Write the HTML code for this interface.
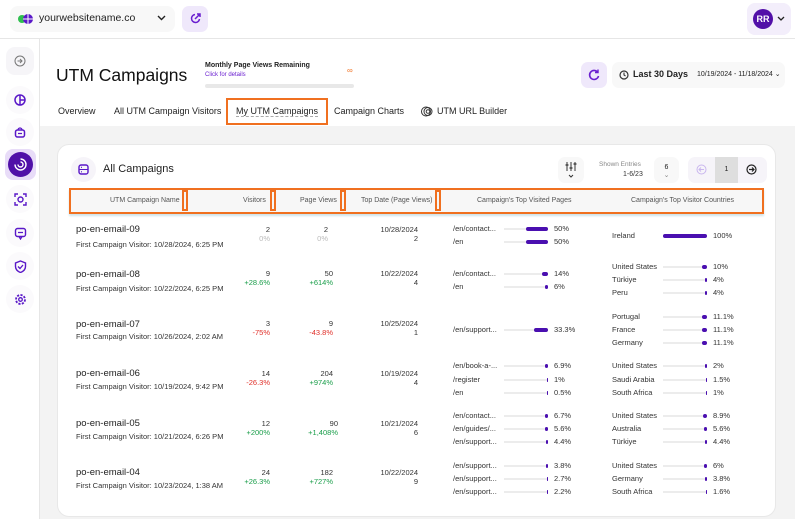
<!DOCTYPE html>
<html><head><meta charset="utf-8"><style>
*{box-sizing:border-box;margin:0;padding:0}
body{width:795px;height:519px;overflow:hidden;background:#fff;font-family:"Liberation Sans",sans-serif;color:#222;position:relative}
.a{position:absolute;white-space:nowrap}
.s{font-size:7.5px;color:#333}
.r{text-align:right}
.trk{position:absolute;height:2px;background:#ececec;width:44px}
.fil{position:absolute;right:0;top:-1px;height:4px;background:#4a0fb0;border-radius:2px}
.ic{position:absolute;width:28px;height:28px;border-radius:50%;background:#fbfafc;display:flex;align-items:center;justify-content:center}
.hd{font-size:7px;color:#555}
.sort{position:absolute;top:190px;width:6px;height:21px;border:2px solid #f07020;background:#f6f6f6}
</style></head><body>
<!-- top bar -->
<div class="a" style="left:10px;top:6px;width:165px;height:26px;border-radius:8px;background:#f8f8f8"></div>
<svg class="a" style="left:17px;top:12px" width="18" height="14"><circle cx="5" cy="7" r="4" fill="#2fbf4f"/><circle cx="11" cy="7" r="5" fill="#5a18c8"/><path d="M6 7h10M11 2v10" stroke="#fff" stroke-width="1"/></svg>
<div class="a" style="left:39px;top:12px;font-size:10.5px;color:#222">yourwebsitename.co</div>
<svg class="a" style="left:157px;top:15px" width="9" height="6"><path d="M1 1l3.5 3.5L8 1" stroke="#222" stroke-width="1.4" fill="none"/></svg>
<div class="a" style="left:182px;top:6px;width:26px;height:26px;border-radius:7px;background:#efe8fb"></div>
<svg class="a" style="left:189px;top:12px" width="13" height="13"><path d="M6 2.5A4 4 0 1 0 10.5 7" stroke="#6a1fd0" stroke-width="1.5" fill="none"/><path d="M6 7l5-5M8 2h3v3" stroke="#6a1fd0" stroke-width="1.5" fill="none"/></svg>
<div class="a" style="left:747px;top:3px;width:44px;height:32px;border-radius:8px;background:#f3eefb"></div>
<div class="a" style="left:753px;top:9px;width:20px;height:20px;border-radius:50%;background:#5210a8;color:#fff;font-size:9px;font-weight:bold;text-align:center;line-height:20px">RR</div>
<svg class="a" style="left:777px;top:16px" width="8" height="6"><path d="M1 1l3 3 3-3" stroke="#222" stroke-width="1.3" fill="none"/></svg>
<div class="a" style="left:0;top:38px;width:795px;height:1px;background:#e6e6e6"></div>
<div class="a" style="left:39px;top:38px;width:1px;height:481px;background:#e6e6e6"></div>
<!-- sidebar -->
<div class="ic" style="left:6px;top:47px;border-radius:9px;background:#f6f5f8"><svg width="12" height="12"><circle cx="6" cy="6" r="5" stroke="#777" fill="none"/><path d="M3.5 6h4M6 4l2 2-2 2" stroke="#777" fill="none"/></svg></div>
<div class="ic" style="left:6px;top:86px"><svg width="12" height="12"><circle cx="6" cy="6" r="5" stroke="#5a18c8" stroke-width="1.5" fill="none"/><path d="M6 1v10M6 6h5" stroke="#5a18c8" stroke-width="1.5"/></svg></div>
<div class="ic" style="left:6px;top:118px"><svg width="12" height="12"><rect x="1.5" y="4" width="9" height="7" rx="2" stroke="#5a18c8" stroke-width="1.5" fill="none"/><path d="M4 4a2 2 0 0 1 4 0M4 7.5h4" stroke="#5a18c8" stroke-width="1.3" fill="none"/></svg></div>
<div class="a" style="left:5px;top:149px;width:31px;height:31px;border-radius:8px;background:#e8dcf8"></div>
<div class="a" style="left:8px;top:152px;width:25px;height:25px;border-radius:50%;background:#5010a8"></div>
<svg class="a" style="left:13px;top:157px" width="15" height="15"><path d="M7.5 2a5.5 5.5 0 1 1-5.5 5.5" stroke="#fff" stroke-width="1.4" fill="none"/><path d="M7.5 5a2.5 2.5 0 1 1-2.5 2.5" stroke="#fff" stroke-width="1.4" fill="none"/></svg>
<div class="ic" style="left:6px;top:185px"><svg width="13" height="13"><path d="M1 4V1h3M9 1h3v3M12 9v3H9M4 12H1V9" stroke="#5a18c8" stroke-width="1.4" fill="none"/><circle cx="6.5" cy="6.5" r="2.5" stroke="#5a18c8" stroke-width="1.4" fill="none"/></svg></div>
<div class="ic" style="left:6px;top:219px"><svg width="13" height="13"><rect x="1.5" y="1.5" width="10" height="8" rx="2" stroke="#5a18c8" stroke-width="1.4" fill="none"/><path d="M5 9.5l1.5 2.5L8 9.5M4 5.5h5" stroke="#5a18c8" stroke-width="1.3" fill="none"/></svg></div>
<div class="ic" style="left:6px;top:252px"><svg width="13" height="13"><path d="M6.5 1l5 2v3.5c0 3-2.5 5-5 6-2.5-1-5-3-5-6V3z" stroke="#5a18c8" stroke-width="1.4" fill="none"/><path d="M4 6.5l2 2 3-3.5" stroke="#5a18c8" stroke-width="1.3" fill="none"/></svg></div>
<div class="ic" style="left:6px;top:285px"><svg width="13" height="13"><circle cx="6.5" cy="6.5" r="4.5" stroke="#5a18c8" stroke-width="1.8" stroke-dasharray="2.2 1.3" fill="none"/><circle cx="6.5" cy="6.5" r="1.8" stroke="#5a18c8" stroke-width="1.3" fill="none"/></svg></div>
<!-- header -->
<div class="a" style="left:56px;top:65px;font-size:17.5px;color:#111">UTM Campaigns</div>
<div class="a" style="left:205px;top:62px;font-size:7px;font-weight:bold;color:#222">Monthly Page Views Remaining</div>
<div class="a" style="left:205px;top:72px;font-size:6px;color:#6a1fd0">Click for details</div>
<div class="a" style="left:347px;top:66px;font-size:8px;color:#f07020">∞</div>
<div class="a" style="left:205px;top:84px;width:149px;height:4px;border-radius:2px;background:#e8e8e8"></div>
<div class="a" style="left:581px;top:62px;width:26px;height:26px;border-radius:7px;background:#efe8fb"></div>
<svg class="a" style="left:588px;top:69px" width="12" height="12"><path d="M9.5 3A4.5 4.5 0 1 0 10.5 7" stroke="#6a1fd0" stroke-width="1.6" fill="none"/><path d="M10 0.5v3H7" stroke="#6a1fd0" stroke-width="1.4" fill="none"/></svg>
<div class="a" style="left:612px;top:62px;width:173px;height:26px;border-radius:7px;background:#f8f8f8"></div>
<svg class="a" style="left:619px;top:70px" width="10" height="10"><circle cx="5" cy="5" r="4" stroke="#333" stroke-width="1.2" fill="none"/><path d="M5 2.5V5l1.5 1" stroke="#333" stroke-width="1.1" fill="none"/></svg>
<div class="a" style="left:633px;top:69px;font-size:9px;font-weight:bold;color:#222">Last 30 Days</div>
<div class="a" style="left:697px;top:70px;font-size:7px;color:#222">10/19/2024 - 11/18/2024 ⌄</div>
<!-- tabs -->
<div class="a" style="left:58px;top:106px;font-size:9px;color:#222">Overview</div>
<div class="a" style="left:114px;top:106px;font-size:9px;color:#222">All UTM Campaign Visitors</div>
<div class="a" style="left:226px;top:98px;width:102px;height:27px;border:2px solid #f07020"></div>
<div class="a" style="left:236px;top:106px;font-size:9px;color:#222;border-bottom:1px dashed #aaa">My UTM Campaigns</div>
<div class="a" style="left:334px;top:106px;font-size:9px;color:#222">Campaign Charts</div>
<svg class="a" style="left:421px;top:106px" width="12" height="11"><circle cx="5" cy="5.5" r="4.5" stroke="#333" fill="none"/><circle cx="7" cy="5.5" r="4" stroke="#333" fill="none"/><circle cx="7" cy="5.5" r="1.8" stroke="#333" fill="none"/></svg>
<div class="a" style="left:437px;top:106px;font-size:9px;color:#222">UTM URL Builder</div>
<!-- gray area -->
<div class="a" style="left:40px;top:126px;width:755px;height:393px;background:#f3f3f3"></div>
<div class="a" style="left:57px;top:144px;width:719px;height:373px;background:#fff;border-radius:12px;border:1px solid #e8e8e8"></div>
<div class="a" style="left:71px;top:157px;width:25px;height:25px;border-radius:50%;background:#f6f4f9"></div>
<svg class="a" style="left:78px;top:164px" width="11" height="11"><rect x="1" y="1" width="9" height="9" rx="2" stroke="#5a18c8" stroke-width="1.4" fill="none"/><path d="M1 5.5h9M3 3.3h1M3 7.8h1" stroke="#5a18c8" stroke-width="1.1"/></svg>
<div class="a" style="left:103px;top:163px;font-size:11px;color:#222">All Campaigns</div>
<div class="a" style="left:558px;top:157px;width:26px;height:26px;border-radius:7px;background:#f8f8f8"></div>
<svg class="a" style="left:565px;top:161px" width="12" height="18"><path d="M2 1v9M6 1v9M10 1v9" stroke="#333"/><path d="M0.5 4h3M4.5 7h3M8.5 3h3" stroke="#333" stroke-width="1.3"/><path d="M4 14l2 2 2-2" stroke="#333" fill="none"/></svg>
<div class="a" style="left:599px;top:161px;font-size:6.5px;color:#888">Shown Entries</div>
<div class="a" style="left:623px;top:171px;font-size:7px;color:#333">1-6/23</div>
<div class="a" style="left:654px;top:157px;width:25px;height:26px;border-radius:7px;background:#f8f8f8;font-size:7px;text-align:center;padding-top:7px">6<br><span style="color:#888">⌄</span></div>
<div class="a" style="left:688px;top:157px;width:79px;height:26px;border-radius:7px;background:#f6f4f9"></div>
<div class="a" style="left:715px;top:157px;width:23px;height:26px;background:#dedede;font-size:7px;text-align:center;line-height:26px">1</div>
<svg class="a" style="left:696px;top:164px" width="11" height="11"><circle cx="5.5" cy="5.5" r="4.5" stroke="#c9b6ee" fill="none"/><path d="M8 5.5H3.5M5 3.5l-2 2 2 2" stroke="#c9b6ee" fill="none"/></svg>
<svg class="a" style="left:746px;top:164px" width="11" height="11"><circle cx="5.5" cy="5.5" r="4.5" stroke="#222" stroke-width="1.2" fill="none"/><path d="M3 5.5h4.5M6 3.5l2 2-2 2" stroke="#222" stroke-width="1.2" fill="none"/></svg>
<!-- table header -->
<div class="a" style="left:69px;top:188px;width:695px;height:26px;border:2px solid #f07020;background:#f7f7f7;box-shadow:0 2px 2px #cfe3ea"></div>
<div class="a hd" style="left:110px;top:197px">UTM Campaign Name</div>
<div class="a hd" style="left:243px;top:197px">Visitors</div>
<div class="a hd" style="left:300px;top:197px">Page Views</div>
<div class="a hd" style="left:361px;top:197px">Top Date (Page Views)</div>
<div class="a hd" style="left:477px;top:197px">Campaign's Top Visited Pages</div>
<div class="a hd" style="left:631px;top:197px">Campaign's Top Visitor Countries</div>
<div class="sort" style="left:182px"></div><div class="sort" style="left:270px"></div><div class="sort" style="left:340px"></div><div class="sort" style="left:435px"></div>

<!-- rows -->
<div class="a" style="left:76px;top:224px;font-size:9.5px">po-en-email-09</div>
<div class="a s" style="left:76px;top:240px">First Campaign Visitor: 10/28/2024, 6:25 PM</div>
<div class="a s r" style="left:230px;width:40px;top:225px">2<br><span style="color:#bbb">0%</span></div>
<div class="a s r" style="left:288px;width:40px;top:225px">2<br><span style="color:#bbb">0%</span></div>
<div class="a s r" style="left:360px;width:58px;top:225px">10/28/2024<br>2</div>
<div class="a s" style="left:453px;top:224px">/en/contact...</div><div class="trk" style="left:504px;top:228px"><div class="fil" style="width:22px"></div></div><div class="a s" style="left:554px;top:224px">50%</div>
<div class="a s" style="left:453px;top:237px">/en</div><div class="trk" style="left:504px;top:241px"><div class="fil" style="width:22px"></div></div><div class="a s" style="left:554px;top:237px">50%</div>
<div class="a s" style="left:612px;top:231px">Ireland</div><div class="trk" style="left:663px;top:235px"><div class="fil" style="width:44px"></div></div><div class="a s" style="left:713px;top:231px">100%</div>

<div class="a" style="left:76px;top:269px;font-size:9.5px">po-en-email-08</div>
<div class="a s" style="left:76px;top:284px">First Campaign Visitor: 10/22/2024, 6:25 PM</div>
<div class="a s r" style="left:230px;width:40px;top:269px">9<br><span style="color:#1a9e4a">+28.6%</span></div>
<div class="a s r" style="left:288px;width:45px;top:269px">50<br><span style="color:#1a9e4a">+614%</span></div>
<div class="a s r" style="left:360px;width:58px;top:269px">10/22/2024<br>4</div>
<div class="a s" style="left:453px;top:269px">/en/contact...</div><div class="trk" style="left:504px;top:273px"><div class="fil" style="width:6px"></div></div><div class="a s" style="left:554px;top:269px">14%</div>
<div class="a s" style="left:453px;top:282px">/en</div><div class="trk" style="left:504px;top:286px"><div class="fil" style="width:3px"></div></div><div class="a s" style="left:554px;top:282px">6%</div>
<div class="a s" style="left:612px;top:262px">United States</div><div class="trk" style="left:663px;top:266px"><div class="fil" style="width:5px"></div></div><div class="a s" style="left:713px;top:262px">10%</div>
<div class="a s" style="left:612px;top:275px">Türkiye</div><div class="trk" style="left:663px;top:279px"><div class="fil" style="width:2px"></div></div><div class="a s" style="left:713px;top:275px">4%</div>
<div class="a s" style="left:612px;top:288px">Peru</div><div class="trk" style="left:663px;top:292px"><div class="fil" style="width:2px"></div></div><div class="a s" style="left:713px;top:288px">4%</div>

<div class="a" style="left:76px;top:319px;font-size:9.5px">po-en-email-07</div>
<div class="a s" style="left:76px;top:332px">First Campaign Visitor: 10/26/2024, 2:02 AM</div>
<div class="a s r" style="left:230px;width:40px;top:319px">3<br><span style="color:#e0302a">-75%</span></div>
<div class="a s r" style="left:288px;width:45px;top:319px">9<br><span style="color:#e0302a">-43.8%</span></div>
<div class="a s r" style="left:360px;width:58px;top:319px">10/25/2024<br>1</div>
<div class="a s" style="left:453px;top:325px">/en/support...</div><div class="trk" style="left:504px;top:329px"><div class="fil" style="width:14px"></div></div><div class="a s" style="left:554px;top:325px">33.3%</div>
<div class="a s" style="left:612px;top:312px">Portugal</div><div class="trk" style="left:663px;top:316px"><div class="fil" style="width:5px"></div></div><div class="a s" style="left:713px;top:312px">11.1%</div>
<div class="a s" style="left:612px;top:325px">France</div><div class="trk" style="left:663px;top:329px"><div class="fil" style="width:5px"></div></div><div class="a s" style="left:713px;top:325px">11.1%</div>
<div class="a s" style="left:612px;top:338px">Germany</div><div class="trk" style="left:663px;top:342px"><div class="fil" style="width:5px"></div></div><div class="a s" style="left:713px;top:338px">11.1%</div>

<div class="a" style="left:76px;top:368px;font-size:9.5px">po-en-email-06</div>
<div class="a s" style="left:76px;top:382px">First Campaign Visitor: 10/19/2024, 9:42 PM</div>
<div class="a s r" style="left:230px;width:40px;top:369px">14<br><span style="color:#e0302a">-26.3%</span></div>
<div class="a s r" style="left:288px;width:45px;top:369px">204<br><span style="color:#1a9e4a">+974%</span></div>
<div class="a s r" style="left:360px;width:58px;top:369px">10/19/2024<br>4</div>
<div class="a s" style="left:453px;top:361px">/en/book-a-...</div><div class="trk" style="left:504px;top:365px"><div class="fil" style="width:3px"></div></div><div class="a s" style="left:554px;top:361px">6.9%</div>
<div class="a s" style="left:453px;top:375px">/register</div><div class="trk" style="left:504px;top:379px"><div class="fil" style="width:1px"></div></div><div class="a s" style="left:554px;top:375px">1%</div>
<div class="a s" style="left:453px;top:388px">/en</div><div class="trk" style="left:504px;top:392px"><div class="fil" style="width:1px"></div></div><div class="a s" style="left:554px;top:388px">0.5%</div>
<div class="a s" style="left:612px;top:361px">United States</div><div class="trk" style="left:663px;top:365px"><div class="fil" style="width:2px"></div></div><div class="a s" style="left:713px;top:361px">2%</div>
<div class="a s" style="left:612px;top:375px">Saudi Arabia</div><div class="trk" style="left:663px;top:379px"><div class="fil" style="width:1px"></div></div><div class="a s" style="left:713px;top:375px">1.5%</div>
<div class="a s" style="left:612px;top:388px">South Africa</div><div class="trk" style="left:663px;top:392px"><div class="fil" style="width:1px"></div></div><div class="a s" style="left:713px;top:388px">1%</div>

<div class="a" style="left:76px;top:418px;font-size:9.5px">po-en-email-05</div>
<div class="a s" style="left:76px;top:432px">First Campaign Visitor: 10/21/2024, 6:26 PM</div>
<div class="a s r" style="left:230px;width:40px;top:419px">12<br><span style="color:#1a9e4a">+200%</span></div>
<div class="a s r" style="left:288px;width:50px;top:419px">90<br><span style="color:#1a9e4a">+1,408%</span></div>
<div class="a s r" style="left:360px;width:58px;top:419px">10/21/2024<br>6</div>
<div class="a s" style="left:453px;top:411px">/en/contact...</div><div class="trk" style="left:504px;top:415px"><div class="fil" style="width:3px"></div></div><div class="a s" style="left:554px;top:411px">6.7%</div>
<div class="a s" style="left:453px;top:424px">/en/guides/...</div><div class="trk" style="left:504px;top:428px"><div class="fil" style="width:3px"></div></div><div class="a s" style="left:554px;top:424px">5.6%</div>
<div class="a s" style="left:453px;top:437px">/en/support...</div><div class="trk" style="left:504px;top:441px"><div class="fil" style="width:2px"></div></div><div class="a s" style="left:554px;top:437px">4.4%</div>
<div class="a s" style="left:612px;top:411px">United States</div><div class="trk" style="left:663px;top:415px"><div class="fil" style="width:4px"></div></div><div class="a s" style="left:713px;top:411px">8.9%</div>
<div class="a s" style="left:612px;top:424px">Australia</div><div class="trk" style="left:663px;top:428px"><div class="fil" style="width:3px"></div></div><div class="a s" style="left:713px;top:424px">5.6%</div>
<div class="a s" style="left:612px;top:437px">Türkiye</div><div class="trk" style="left:663px;top:441px"><div class="fil" style="width:2px"></div></div><div class="a s" style="left:713px;top:437px">4.4%</div>

<div class="a" style="left:76px;top:467px;font-size:9.5px">po-en-email-04</div>
<div class="a s" style="left:76px;top:481px">First Campaign Visitor: 10/23/2024, 1:38 AM</div>
<div class="a s r" style="left:230px;width:40px;top:468px">24<br><span style="color:#1a9e4a">+26.3%</span></div>
<div class="a s r" style="left:288px;width:45px;top:468px">182<br><span style="color:#1a9e4a">+727%</span></div>
<div class="a s r" style="left:360px;width:58px;top:468px">10/22/2024<br>9</div>
<div class="a s" style="left:453px;top:461px">/en/support...</div><div class="trk" style="left:504px;top:465px"><div class="fil" style="width:2px"></div></div><div class="a s" style="left:554px;top:461px">3.8%</div>
<div class="a s" style="left:453px;top:474px">/en/support...</div><div class="trk" style="left:504px;top:478px"><div class="fil" style="width:1px"></div></div><div class="a s" style="left:554px;top:474px">2.7%</div>
<div class="a s" style="left:453px;top:487px">/en/support...</div><div class="trk" style="left:504px;top:491px"><div class="fil" style="width:1px"></div></div><div class="a s" style="left:554px;top:487px">2.2%</div>
<div class="a s" style="left:612px;top:461px">United States</div><div class="trk" style="left:663px;top:465px"><div class="fil" style="width:3px"></div></div><div class="a s" style="left:713px;top:461px">6%</div>
<div class="a s" style="left:612px;top:474px">Germany</div><div class="trk" style="left:663px;top:478px"><div class="fil" style="width:2px"></div></div><div class="a s" style="left:713px;top:474px">3.8%</div>
<div class="a s" style="left:612px;top:487px">South Africa</div><div class="trk" style="left:663px;top:491px"><div class="fil" style="width:1px"></div></div><div class="a s" style="left:713px;top:487px">1.6%</div>
</body></html>
